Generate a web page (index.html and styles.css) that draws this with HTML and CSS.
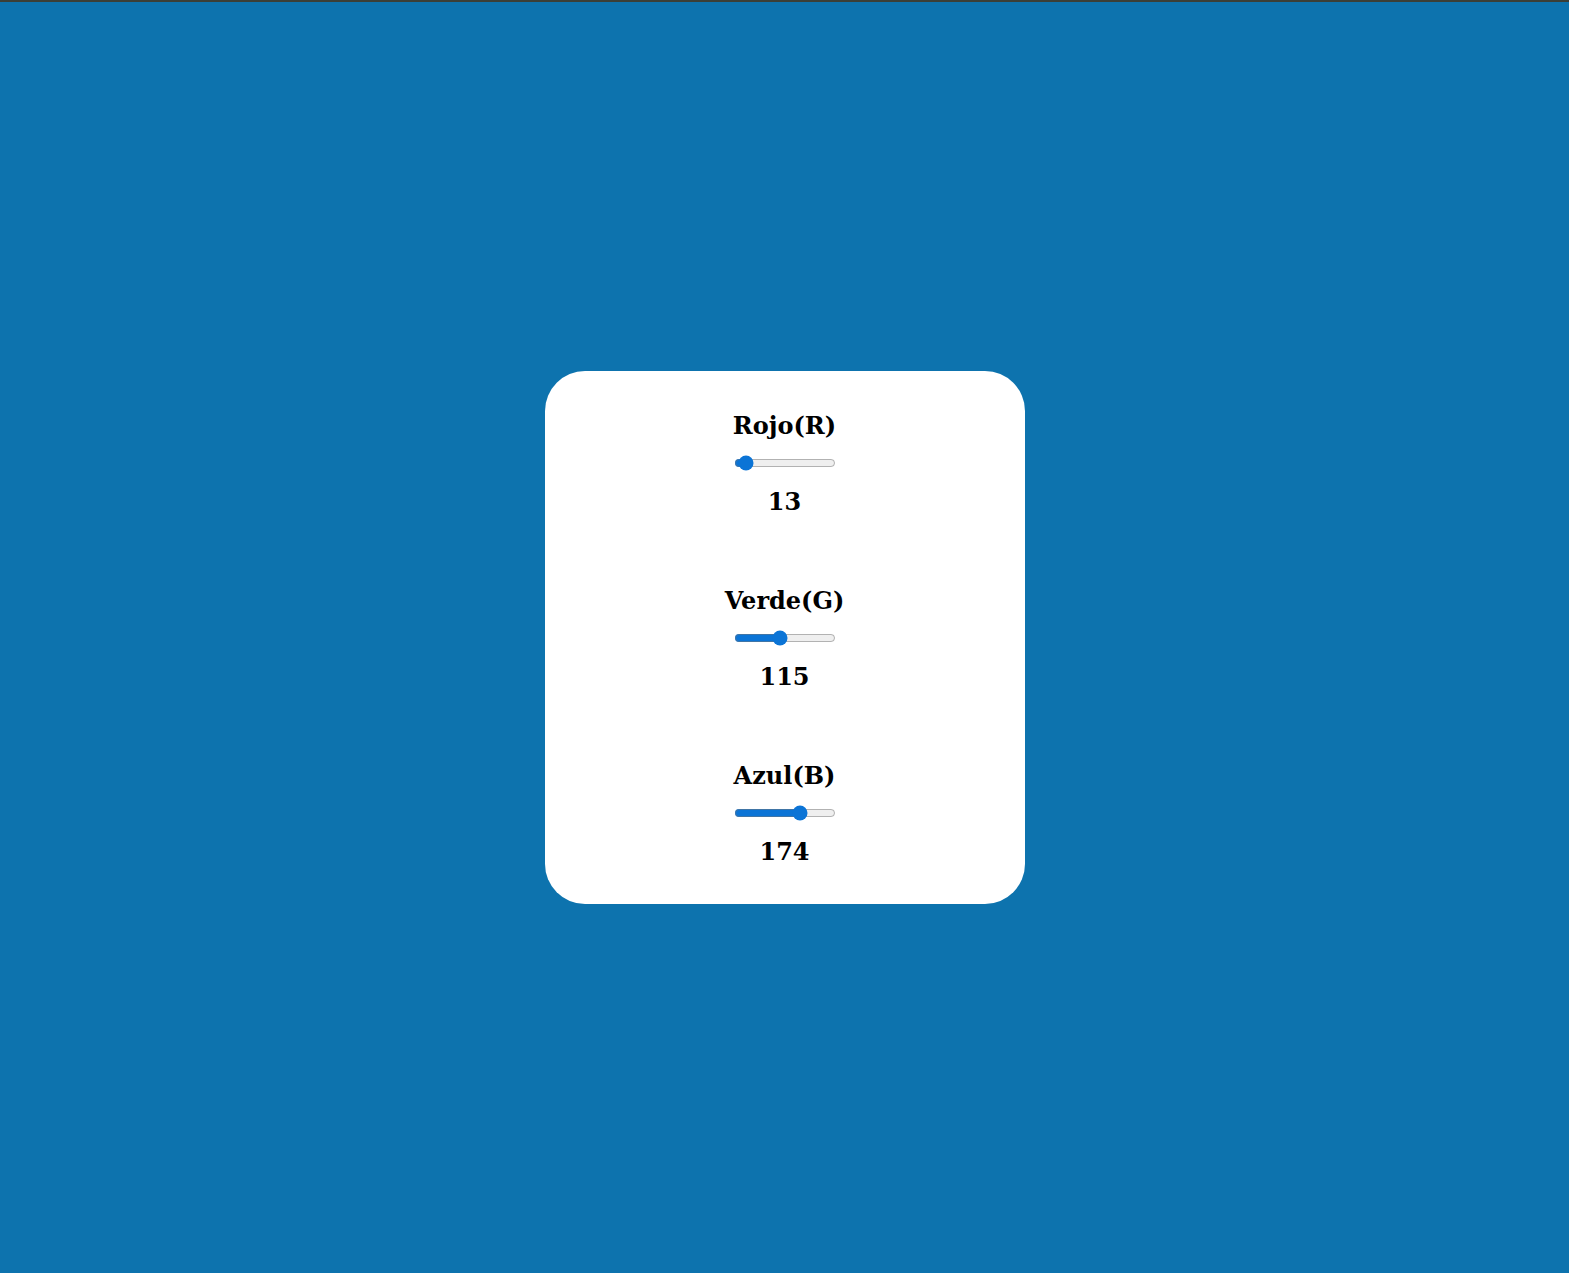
FILE: index.html
```html
<!DOCTYPE html>
<html lang="es">
<head>
<meta charset="utf-8">
<title>RGB</title>
<link rel="stylesheet" href="styles.css">
</head>
<body>
<main class="page">
  <section class="card">
    <div class="channel">
      <h2 class="label">Rojo(R)</h2>
      <input class="slider" type="range" min="0" max="255" value="13">
      <p class="value">13</p>
    </div>
    <div class="channel">
      <h2 class="label">Verde(G)</h2>
      <input class="slider" type="range" min="0" max="255" value="115">
      <p class="value">115</p>
    </div>
    <div class="channel">
      <h2 class="label">Azul(B)</h2>
      <input class="slider" type="range" min="0" max="255" value="174">
      <p class="value">174</p>
    </div>
  </section>
</main>
</body>
</html>
```

FILE: styles.css
```css
html, body {
  margin: 0;
  padding: 0;
}
body {
  background: #0d73ae;
  border-top: 2px solid #3b3f37;
  font-family: "DejaVu Serif", "Liberation Serif", serif;
  color: #000;
}
.page {
  min-height: calc(100vh - 2px);
  display: flex;
  align-items: center;
  justify-content: center;
}
.card {
  width: 480px;
  box-sizing: border-box;
  background: #fff;
  border-radius: 40px;
  padding: 41px 0 38px;
  display: flex;
  flex-direction: column;
  align-items: center;
  gap: 71px;
}
.channel {
  display: flex;
  flex-direction: column;
  align-items: center;
}
.label {
  margin: 0;
  font-size: 24px;
  line-height: 28px;
  font-weight: bold;
}
.slider {
  margin: 15px 0 17px;
  width: 102px;
  height: 16px;
  accent-color: #0b74d6;
}
.value {
  margin: 0;
  font-size: 24px;
  line-height: 28px;
  font-weight: bold;
}
```
